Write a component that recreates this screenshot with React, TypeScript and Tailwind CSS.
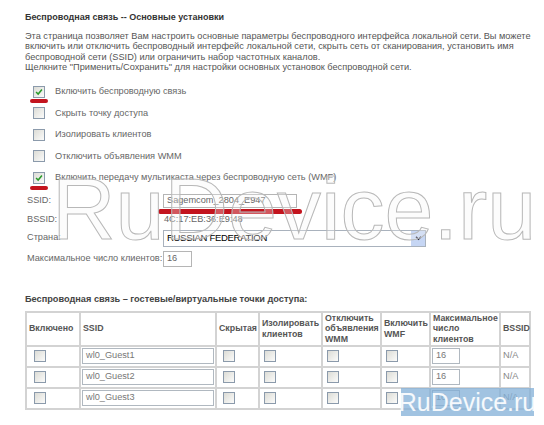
import React from "react";

const OPTIONS = [
  { label: "Включить беспроводную связь", checked: true },
  { label: "Скрыть точку доступа", checked: false },
  { label: "Изолировать клиентов", checked: false },
  { label: "Отключить объявления WMM", checked: false },
  { label: "Включить передачу мультикаста через беспроводную сеть (WMF)", checked: true },
];

const GUESTS = ["wl0_Guest1", "wl0_Guest2", "wl0_Guest3"];

function Box({ checked }: { checked?: boolean }) {
  return (
    <span className="inline-flex h-[12px] w-[12px] shrink-0 items-center justify-center border border-[#8b9aab] bg-gradient-to-br from-[#dcdcd6] to-[#fbfbfa]">
      {checked && (
        <svg viewBox="0 0 12 12" className="h-[10px] w-[10px]">
          <path d="M2.5 6 L5 8.5 L9.5 3" fill="none" stroke="#2a9a2a" strokeWidth="1.8" />
        </svg>
      )}
    </span>
  );
}

export default function App() {
  return (
    <div className="relative h-[425px] w-[544px] overflow-hidden bg-white font-['Liberation_Sans',Arial,sans-serif] text-[9.2px] text-[#555]">
      <div className="pl-[25px] pt-[10px]">
        <h1 className="h-[14px] whitespace-nowrap text-[9px] font-bold leading-[14px] text-[#333]">
          Беспроводная связь -- Основные установки
        </h1>
        <p className="mt-[7px] whitespace-nowrap leading-[10.3px]">
          Эта страница позволяет Вам настроить основные параметры беспроводного интерфейса локальной сети. Вы можете
          <br />
          включить или отключить беспроводный интерфейс локальной сети, скрыть сеть от сканирования, установить имя
          <br />
          беспроводной сети (SSID) или ограничить набор частотных каналов.
          <br />
          Щелкните "Применить/Сохранить" для настройки основных установок беспроводной сети.
        </p>

        <div className="mt-[9px] flex flex-col pl-[8px] text-[#666]">
          {OPTIONS.map((o) => (
            <label key={o.label} className="flex h-[21.5px] items-center gap-[10px] whitespace-nowrap">
              <Box checked={o.checked} />
              <span>{o.label}</span>
            </label>
          ))}
        </div>

        <div className="mt-[3px] grid grid-cols-[136px_1fr] grid-rows-[19px_18px_19px_22px] items-center whitespace-nowrap pl-[2px] text-[#666]">
          <span>SSID:</span>
          <div className="flex h-[14px] w-[134px] items-center border border-[#b5b5b5] pl-[3px] text-[#666]">
            Sagemcom_2804_E947
          </div>
          <span>BSSID:</span>
          <span className="pl-[1px]">4C:17:EB:36:E9:48</span>
          <span>Страна:</span>
          <div className="flex h-[17px] w-[263px] items-center justify-between border border-[#a9b2bd] pl-[3px] text-[9.5px] tracking-[-0.3px] text-black">
            <span>RUSSIAN FEDERATION</span>
            <span className="flex h-[15px] w-[14px] items-center justify-center bg-[#c6d6f4]">
              <svg viewBox="0 0 8 6" className="h-[5px] w-[7px]">
                <path d="M1 1 L4 4 L7 1" fill="none" stroke="#223" strokeWidth="1.6" />
              </svg>
            </span>
          </div>
          <span>Максимальное число клиентов:</span>
          <div className="flex h-[16px] w-[29px] items-center border border-[#b5b5b5] pl-[3px]">16</div>
        </div>

        <h2 className="mt-[23px] h-[12px] whitespace-nowrap text-[9.2px] font-bold leading-[12px] text-[#444]">
          Беспроводная связь – гостевые/виртуальные точки доступа:
        </h2>

        <table className="mt-[6px] w-[504px] table-fixed border-collapse text-left">
          <colgroup>
            <col className="w-[54px]" />
            <col className="w-[136px]" />
            <col className="w-[43px]" />
            <col className="w-[63px]" />
            <col className="w-[59px]" />
            <col className="w-[49px]" />
            <col className="w-[70px]" />
            <col className="w-[30px]" />
          </colgroup>
          <thead>
            <tr className="h-[34px] whitespace-nowrap text-[8.8px] font-bold leading-[10.5px] text-[#555]">
              <th className="border-2 border-[#d3d3d3] px-[2px]">Включено</th>
              <th className="border-2 border-[#d3d3d3] px-[2px]">SSID</th>
              <th className="border-2 border-[#d3d3d3] px-[2px]">Скрытая</th>
              <th className="border-2 border-[#d3d3d3] px-[2px]">
                Изолировать
                <br />
                клиентов
              </th>
              <th className="border-2 border-[#d3d3d3] px-[2px]">
                Отключить
                <br />
                объявления
                <br />
                WMM
              </th>
              <th className="border-2 border-[#d3d3d3] px-[2px]">
                Включить
                <br />
                WMF
              </th>
              <th className="border-2 border-[#d3d3d3] px-[2px]">
                Максимальное
                <br />
                число
                <br />
                клиентов
              </th>
              <th className="border-2 border-[#d3d3d3] px-[2px]">BSSID</th>
            </tr>
          </thead>
          <tbody>
            {GUESTS.map((g) => (
              <tr key={g} className="h-[21px]">
                <td className="border-2 border-[#d3d3d3] pl-[7px]">
                  <div className="flex"><Box /></div>
                </td>
                <td className="border-2 border-[#d3d3d3] px-[1px]">
                  <div className="flex h-[16px] items-center border border-[#b0b8c0] pl-[3px] text-[#777]">{g}</div>
                </td>
                <td className="border-2 border-[#d3d3d3] pl-[6px]">
                  <div className="flex"><Box /></div>
                </td>
                <td className="border-2 border-[#d3d3d3] pl-[4px]">
                  <div className="flex"><Box /></div>
                </td>
                <td className="border-2 border-[#d3d3d3] pl-[4px]">
                  <div className="flex"><Box /></div>
                </td>
                <td className="border-2 border-[#d3d3d3] pl-[4px]">
                  <div className="flex"><Box /></div>
                </td>
                <td className="border-2 border-[#d3d3d3] px-[1px]">
                  <div className="flex h-[16px] w-[28px] items-center border border-[#b0b8c0] pl-[3px] text-[#777]">16</div>
                </td>
                <td className="border-2 border-[#d3d3d3] pl-[2px] text-[#888]">N/A</td>
              </tr>
            ))}
          </tbody>
        </table>
      </div>

      {/* red marker lines */}
      <span className="absolute left-[30px] top-[99px] h-[4px] w-[18px] rounded-full bg-[#c3141e]" />
      <span className="absolute left-[30px] top-[186px] h-[4px] w-[18px] rounded-full bg-[#c3141e]" />
      <span className="absolute left-[158px] top-[209px] h-[5px] w-[144px] rounded-full bg-[#c3141e]" />

      {/* watermarks */}
      <div className="pointer-events-none absolute left-[52px] top-[165px] font-['Liberation_Sans',Arial,sans-serif] text-[88px] leading-none text-[rgba(245,245,245,0.3)] [-webkit-text-stroke:1px_#b8b8b8]">
        RuDevice.ru
      </div>
      <div className="pointer-events-none absolute left-[401px] top-[388px] flex h-[28px] w-[133px] items-center justify-center bg-[rgba(130,175,215,0.75)] text-[25px] leading-none text-white/90">
        RuDevice.ru
      </div>
    </div>
  );
}
